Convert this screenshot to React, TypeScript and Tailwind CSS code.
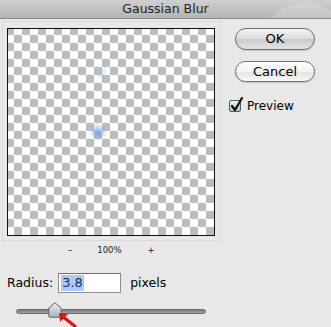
import React from 'react';

const font = { fontFamily: '"DejaVu Sans", "Lucida Grande", sans-serif' };

function AquaButton({ label, primary }: { label: string; primary?: boolean }) {
  return (
    <button
      className={
        'flex items-center justify-center w-[80px] rounded-full border border-[#6e6e6e] text-[13px] text-black shadow-[0_1px_1px_rgba(0,0,0,0.15)] ' +
        (primary
          ? 'h-[22px] bg-[linear-gradient(#f4f4f4,#dcdcdc_50%,#c9c9c9_51%,#e4e4e4)]'
          : 'h-[21px] bg-[linear-gradient(#ffffff,#f2f2f2_50%,#e4e4e4_51%,#f7f7f7)]')
      }
    >
      {label}
    </button>
  );
}

function Checkbox() {
  return (
    <div className="relative w-[12px] h-[12px] border border-[#5a5a5a] rounded-[2px] bg-[linear-gradient(#f0f2f6,#b9c0cb)]">
      <svg className="absolute left-[0px] top-[-4px]" width="14" height="16" viewBox="0 0 14 16">
        <path d="M2 9 L5 13 L12 1" fill="none" stroke="#111" strokeWidth="2.2" strokeLinecap="round" strokeLinejoin="round" />
      </svg>
    </div>
  );
}

export default function App() {
  return (
    <div className="relative w-[331px] h-[327px] overflow-hidden bg-[#e8e8e8] flex flex-col" style={font}>
      {/* title bar */}
      <div className="relative h-[19px] shrink-0 overflow-hidden border-b border-[#8c8c8c] bg-[linear-gradient(#cfcfcf,#b4b4b4)] flex items-center justify-center">
        <div className="absolute left-[258px] top-[3px] w-[94px] h-[94px] rounded-full bg-white/20" />
        <span className="relative text-[12.5px] text-[#222]">Gaussian Blur</span>
      </div>

      <div className="flex pt-[2px]">
        {/* preview group */}
        <div className="ml-[2px] w-[219px] border border-[#dadada] pl-[4px] pt-[6px] pb-[4px]">
          <div className="relative w-[208px] h-[208px] border border-[#111] bg-[repeating-conic-gradient(#ffffff_0_25%,#bdbdbd_0_50%)] bg-[length:16px_16px] bg-[position:-2px_-2px]">
            <div className="absolute left-[86px] top-[37px] w-[14px] h-[14px] rounded-full bg-[radial-gradient(circle,rgba(150,190,240,0.55),rgba(150,190,240,0)_70%)]" />
            <div className="absolute left-[81px] top-[94px] w-[18px] h-[18px] rounded-full bg-[radial-gradient(circle,rgba(110,165,235,0.85),rgba(140,185,240,0)_70%)]" />
          </div>
        </div>

        {/* buttons */}
        <div className="ml-[14px] pt-[7px] flex flex-col">
          <AquaButton label="OK" primary />
          <div className="mt-[11px]">
            <AquaButton label="Cancel" />
          </div>
          <div className="mt-[15px] ml-[-6px] flex items-center gap-[6px]">
            <Checkbox />
            <span className="text-[12px] text-black">Preview</span>
          </div>
        </div>
      </div>

      {/* zoom row */}
      <div className="mt-[3px] h-[12px] flex items-center text-[8.5px] text-[#222]">
        <span className="ml-[68px]">–</span>
        <span className="ml-[25px]">100%</span>
        <span className="ml-[26px]">+</span>
      </div>

      {/* radius row */}
      <div className="mt-[17px] h-[20px] flex items-center text-[12.5px] text-black">
        <span className="ml-[7px]">Radius:</span>
        <div className="ml-[5px] w-[63px] h-[20px] border border-[#8e8e8e] border-t-[#6f6f6f] bg-white flex items-center pl-[2px]">
          <span className="bg-[#a9caf4] px-[1px] h-[16px] flex items-center text-[13px] text-[#1d2a55]">3.8</span>
        </div>
        <span className="ml-[9px]">pixels</span>
      </div>

      {/* slider */}
      <div className="mt-[10px] h-[16px] flex items-center">
        <div className="relative ml-[16px] w-[190px] h-[5px] rounded-full border border-[#6a6a6a] bg-[linear-gradient(#7a7a7a,#a2a2a2)]">
          <svg className="absolute left-[31px] top-[-8px]" width="14" height="16" viewBox="0 0 14 16">
            <defs>
              <linearGradient id="th" x1="0" y1="0" x2="0" y2="1">
                <stop offset="0" stopColor="#eef0f4" />
                <stop offset="1" stopColor="#a8afba" />
              </linearGradient>
            </defs>
            <path d="M7 0.8 L13.2 6 L13.2 14.2 Q13.2 15.2 12.2 15.2 L1.8 15.2 Q0.8 15.2 0.8 14.2 L0.8 6 Z" fill="url(#th)" stroke="#626262" strokeWidth="1" />
          </svg>
        </div>
      </div>

      {/* red arrow */}
      <svg className="absolute left-[56px] top-[311px]" width="24" height="16" viewBox="0 0 24 16">
        <polygon points="3,2 12,3 4,11" fill="#e3120f" />
        <line x1="6" y1="5" x2="20" y2="16" stroke="#e3120f" strokeWidth="3.2" />
      </svg>
    </div>
  );
}
